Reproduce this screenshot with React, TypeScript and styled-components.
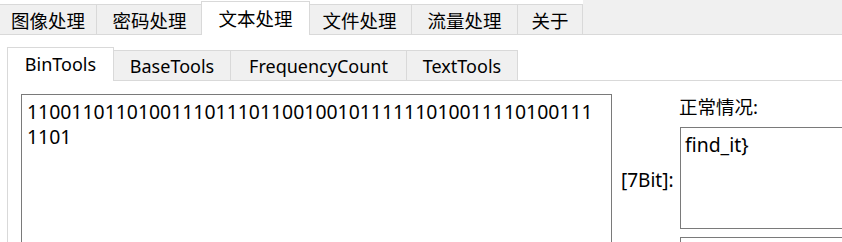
import styled, { createGlobalStyle } from "styled-components";

const GlobalStyle = createGlobalStyle`
  body {
    margin: 0;
    background: #ffffff;
    overflow: hidden;
    font-family: "Noto Sans", "Noto Sans CJK SC", sans-serif;
    color: #000000;
  }
`;

const Window = styled.div`
  width: 842px;
  height: 242px;
  overflow: hidden;
  background: #ffffff;
`;

const TopStrip = styled.div`
  display: flex;
  align-items: flex-end;
  height: 35px;
`;

const TopTab = styled.div<{ $w: number; $active?: boolean }>`
  box-sizing: border-box;
  width: ${(p) => p.$w}px;
  height: ${(p) => (p.$active ? 34 : 31)}px;
  display: flex;
  align-items: center;
  justify-content: center;
  font-size: 18.5px;
  background: ${(p) => (p.$active ? "#ffffff" : "#f0f0f0")};
  border: 1px solid #d9d9d9;
  border-left: ${(p) => (p.$active ? "1px solid #d9d9d9" : "none")};
  border-bottom: ${(p) => (p.$active ? "none" : "1px solid #d9d9d9")};
  margin: ${(p) => (p.$active ? "0 -2px" : "0")};
  padding-bottom: ${(p) => (p.$active ? 2 : 0)}px;
  position: relative;
  z-index: ${(p) => (p.$active ? 1 : 0)};
  flex-shrink: 0;
`;

const StripFiller = styled.div`
  flex: 1;
  height: 34px;
  background: #f0f0f0;
  border-bottom: 1px solid #d9d9d9;
`;

const InnerStrip = styled.div`
  display: flex;
  align-items: flex-end;
  height: 34px;
  margin: 12px 0 0 7px;
`;

const InnerTab = styled.div<{ $w: number; $active?: boolean }>`
  box-sizing: border-box;
  width: ${(p) => p.$w}px;
  height: ${(p) => (p.$active ? 34 : 31)}px;
  display: flex;
  align-items: center;
  justify-content: center;
  font-size: 18px;
  background: ${(p) => (p.$active ? "#ffffff" : "#f0f0f0")};
  border: 1px solid #d9d9d9;
  border-left: ${(p) => (p.$active ? "1px solid #d9d9d9" : "none")};
  border-bottom: ${(p) => (p.$active ? "none" : "1px solid #d9d9d9")};
  padding-bottom: ${(p) => (p.$active ? 2 : 0)}px;
  flex-shrink: 0;
`;

const InnerFiller = styled.div`
  flex: 1;
  height: 34px;
  border-bottom: 1px solid #d9d9d9;
`;

const Panel = styled.div`
  margin-left: 7px;
  height: 200px;
  border-left: 1px solid #d9d9d9;
  padding: 13px 0 0 13px;
  display: flex;
  align-items: flex-start;
`;

const BinInput = styled.textarea`
  box-sizing: border-box;
  width: 591px;
  height: 200px;
  flex-shrink: 0;
  border: 1px solid #7a7a7a;
  padding: 4px 5px;
  margin: 0;
  font-family: "Noto Sans", sans-serif;
  font-size: 19.4px;
  line-height: 25px;
  color: #000000;
  resize: none;
  outline: none;
  overflow: hidden;
`;

const BitLabel = styled.div`
  width: 68px;
  flex-shrink: 0;
  box-sizing: border-box;
  padding-left: 9px;
  margin-top: 74px;
  font-size: 19px;
  line-height: 24px;
  white-space: nowrap;
`;

const ResultCol = styled.div`
  display: flex;
  flex-direction: column;
  width: 240px;
  flex-shrink: 0;
`;

const ResultLabel = styled.div`
  font-size: 18.5px;
  line-height: 26px;
  margin: 0 0 7px -1px;
`;

const ResultBox = styled.div<{ $h: number }>`
  box-sizing: border-box;
  height: ${(p) => p.$h}px;
  border: 1px solid #7a7a7a;
  padding: 4px 4px;
  font-size: 19.4px;
  line-height: 25px;
  & + & {
    margin-top: 8px;
  }
`;

const topTabs = [
  { label: "图像处理", w: 97 },
  { label: "密码处理", w: 106 },
  { label: "文本处理", w: 109, active: true },
  { label: "文件处理", w: 104 },
  { label: "流量处理", w: 106 },
  { label: "关于", w: 65 },
];

const innerTabs = [
  { label: "BinTools", w: 107, active: true },
  { label: "BaseTools", w: 117 },
  { label: "FrequencyCount", w: 176 },
  { label: "TextTools", w: 111 },
];

export default function App() {
  return (
    <Window>
      <GlobalStyle />
      <TopStrip>
        {topTabs.map((t) => (
          <TopTab key={t.label} $w={t.w} $active={t.active}>
            {t.label}
          </TopTab>
        ))}
        <StripFiller />
      </TopStrip>
      <InnerStrip>
        {innerTabs.map((t) => (
          <InnerTab key={t.label} $w={t.w} $active={t.active}>
            {t.label}
          </InnerTab>
        ))}
        <InnerFiller />
      </InnerStrip>
      <Panel>
        <BinInput
          readOnly
          defaultValue={
            "110011011010011101110110010010111111010011110100111\n1101"
          }
        />
        <BitLabel>[7Bit]:</BitLabel>
        <ResultCol>
          <ResultLabel>正常情况:</ResultLabel>
          <ResultBox $h={102}>{"find_it}"}</ResultBox>
          <ResultBox $h={60} />
        </ResultCol>
      </Panel>
    </Window>
  );
}
